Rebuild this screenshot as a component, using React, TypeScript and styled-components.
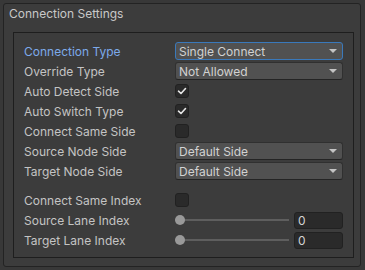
import React from 'react';
import styled, { createGlobalStyle } from 'styled-components';

const GlobalStyle = createGlobalStyle`
  html, body {
    margin: 0;
    padding: 0;
    background: #383838;
  }
  body {
    font-family: "Inter", "Noto Sans", sans-serif;
    font-size: 12px;
    color: #c4c4c4;
  }
`;

const Page = styled.div`
  width: 365px;
  height: 270px;
  padding: 3px;
  box-sizing: border-box;
`;

const Panel = styled.div`
  width: 358px;
  height: 264px;
  box-sizing: border-box;
  border: 1px solid #232323;
  border-radius: 3px;
  background: #3c3c3c;
  padding: 0 6px 0 9px;
`;

const PanelTitle = styled.div`
  font-size: 12px;
  line-height: 20px;
  color: #c8c8c8;
  padding-left: 5px;
  margin-left: -9px;
  margin-bottom: 8px;
`;

const Box = styled.div`
  border: 1px solid #1e1e1e;
  height: 226px;
  box-sizing: border-box;
  padding: 8px 10px 0 10px;
  display: flex;
  flex-direction: column;
`;

const Group = styled.div<{ $gap?: number }>`
  display: flex;
  flex-direction: column;
  margin-top: ${(p) => p.$gap ?? 0}px;
`;

const Row = styled.div`
  display: flex;
  align-items: center;
  height: 20px;
`;

const Label = styled.div<{ $active?: boolean }>`
  width: 151px;
  flex-shrink: 0;
  color: ${(p) => (p.$active ? '#7caaea' : '#c4c4c4')};
  white-space: nowrap;
`;

const Control = styled.div`
  flex: 1;
  display: flex;
  align-items: center;
  gap: 5px;
`;

const Dropdown = styled.div<{ $focused?: boolean }>`
  flex: 1;
  height: 18px;
  box-sizing: border-box;
  background: #515151;
  border: 1px solid ${(p) => (p.$focused ? '#3a79bb' : '#303030')};
  border-bottom-color: ${(p) => (p.$focused ? '#3a79bb' : '#242424')};
  border-radius: 3px;
  display: flex;
  align-items: center;
  justify-content: space-between;
  padding: 0 5px 0 3px;
  color: #d2d2d2;
`;

const Arrow = styled.span`
  width: 0;
  height: 0;
  border-left: 4px solid transparent;
  border-right: 4px solid transparent;
  border-top: 4px solid #c4c4c4;
`;

const Checkbox = styled.div`
  width: 14px;
  height: 14px;
  box-sizing: border-box;
  background: #2a2a2a;
  border: 1px solid #212121;
  border-radius: 3px;
  display: flex;
  align-items: center;
  justify-content: center;
`;

const SliderTrack = styled.div`
  position: relative;
  flex: 1;
  height: 20px;
  display: flex;
  align-items: center;
  &::before {
    content: '';
    position: absolute;
    left: 0;
    right: 0;
    top: 9px;
    height: 2px;
    background: #5e5e5e;
  }
`;

const Knob = styled.div`
  position: absolute;
  left: 0;
  top: 5px;
  width: 10px;
  height: 10px;
  border-radius: 50%;
  background: #999999;
`;

const NumberField = styled.div`
  width: 49px;
  height: 17px;
  box-sizing: border-box;
  background: #2a2a2a;
  border: 1px solid #212121;
  border-radius: 3px;
  padding-left: 3px;
  display: flex;
  align-items: center;
  color: #d2d2d2;
`;

const Check = () => (
  <svg width="10" height="10" viewBox="0 0 10 10">
    <path d="M1.5 5.2 L4 7.5 L8.5 2.5" fill="none" stroke="#e6e6e6" strokeWidth="1.6" strokeLinecap="round" strokeLinejoin="round" />
  </svg>
);

const Select: React.FC<{ value: string; focused?: boolean }> = ({ value, focused }) => (
  <Dropdown $focused={focused}>
    <span>{value}</span>
    <Arrow />
  </Dropdown>
);

const Slider: React.FC<{ value: number }> = ({ value }) => (
  <>
    <SliderTrack>
      <Knob />
    </SliderTrack>
    <NumberField>{value}</NumberField>
  </>
);

export default function App() {
  return (
    <>
      <GlobalStyle />
      <Page>
        <Panel>
          <PanelTitle>Connection Settings</PanelTitle>
          <Box>
            <Group>
              <Row>
                <Label $active>Connection Type</Label>
                <Control><Select value="Single Connect" focused /></Control>
              </Row>
              <Row>
                <Label>Override Type</Label>
                <Control><Select value="Not Allowed" /></Control>
              </Row>
              <Row>
                <Label>Auto Detect Side</Label>
                <Control><Checkbox><Check /></Checkbox></Control>
              </Row>
              <Row>
                <Label>Auto Switch Type</Label>
                <Control><Checkbox><Check /></Checkbox></Control>
              </Row>
              <Row>
                <Label>Connect Same Side</Label>
                <Control><Checkbox /></Control>
              </Row>
              <Row>
                <Label>Source Node Side</Label>
                <Control><Select value="Default Side" /></Control>
              </Row>
              <Row>
                <Label>Target Node Side</Label>
                <Control><Select value="Default Side" /></Control>
              </Row>
            </Group>
            <Group $gap={9}>
              <Row>
                <Label>Connect Same Index</Label>
                <Control><Checkbox /></Control>
              </Row>
              <Row>
                <Label>Source Lane Index</Label>
                <Control><Slider value={0} /></Control>
              </Row>
              <Row>
                <Label>Target Lane Index</Label>
                <Control><Slider value={0} /></Control>
              </Row>
            </Group>
          </Box>
        </Panel>
      </Page>
    </>
  );
}
